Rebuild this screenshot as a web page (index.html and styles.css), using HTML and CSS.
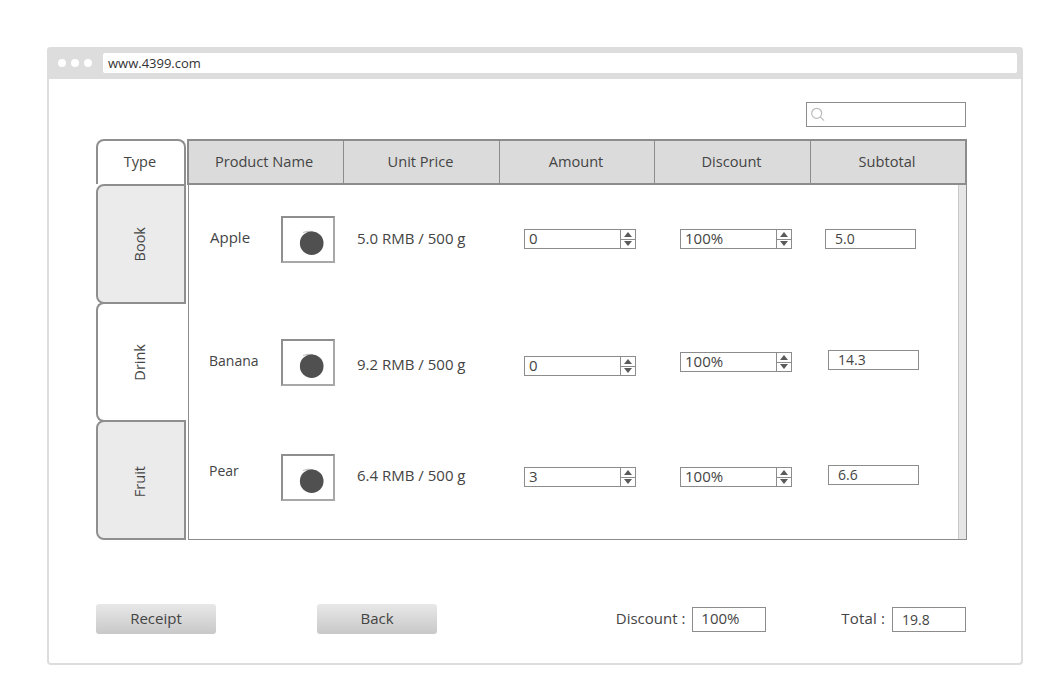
FILE: index.html
```html
<!DOCTYPE html>
<html lang="en">

<head>
    <meta charset="UTF-8">
    <meta name="viewport" content="width=device-width, initial-scale=1.0">
    <title>Product List</title>
    <link rel="stylesheet" href="styles.css">
</head>

<body>
    <div class="browser">
        <div class="titlebar">
            <div class="dots"><span></span><span></span><span></span></div>
            <div class="url">www.4399.com</div>
        </div>

        <div class="page">
            <div class="search-row">
                <div class="search">
                    <svg width="16" height="16" viewBox="0 0 16 16" fill="none" stroke="#bbbbbb" stroke-width="1.2">
                        <circle cx="5.700" cy="6.300" r="5"></circle>
                        <path d="M9.300 9.900l3.800 3.800"></path>
                    </svg>
                </div>
            </div>

            <div class="main">
                <div class="tabs">
                    <div class="tab-type">Type</div>
                    <div class="tab tab-grey"><span>Book</span></div>
                    <div class="tab tab-white"><span>Drink</span></div>
                    <div class="tab tab-grey"><span>Fruit</span></div>
                </div>

                <div class="grid">
                    <div class="grid-head">
                        <div class="head-cell head-name">Product Name</div>
                        <div class="head-cell">Unit Price</div>
                        <div class="head-cell">Amount</div>
                        <div class="head-cell">Discount</div>
                        <div class="head-cell">Subtotal</div>
                    </div>
                    <div class="grid-body">
                        <div class="rows">
                            <div class="row row-apple">
                                <div class="name">Apple</div>
                                <div class="thumb">
                                    <svg width="50" height="43" viewBox="0 0 50 43">
                                        <path d="M20 14.500Q25 12.500 30 13.500" fill="none" stroke="#bbbbbb"></path>
                                        <circle cx="28.700" cy="25.200" r="11.800" fill="#505050"></circle>
                                    </svg>
                                </div>
                                <div class="price">5.0 RMB / 500 g</div>
                                <div class="spinner amount"><span class="val">0</span><span class="arrows"><i class="up"></i><i class="down"></i></span></div>
                                <div class="spinner discount"><span class="val">100%</span><span class="arrows"><i class="up"></i><i class="down"></i></span></div>
                                <div class="subtotal">5.0</div>
                            </div>
                            <div class="row row-banana">
                                <div class="name">Banana</div>
                                <div class="thumb">
                                    <svg width="50" height="43" viewBox="0 0 50 43">
                                        <path d="M20 14.500Q25 12.500 30 13.500" fill="none" stroke="#bbbbbb"></path>
                                        <circle cx="28.700" cy="25.200" r="11.800" fill="#505050"></circle>
                                    </svg>
                                </div>
                                <div class="price">9.2 RMB / 500 g</div>
                                <div class="spinner amount"><span class="val">0</span><span class="arrows"><i class="up"></i><i class="down"></i></span></div>
                                <div class="spinner discount"><span class="val">100%</span><span class="arrows"><i class="up"></i><i class="down"></i></span></div>
                                <div class="subtotal">14.3</div>
                            </div>
                            <div class="row row-pear">
                                <div class="name">Pear</div>
                                <div class="thumb">
                                    <svg width="50" height="43" viewBox="0 0 50 43">
                                        <path d="M20 14.500Q25 12.500 30 13.500" fill="none" stroke="#bbbbbb"></path>
                                        <circle cx="28.700" cy="25.200" r="11.800" fill="#505050"></circle>
                                    </svg>
                                </div>
                                <div class="price">6.4 RMB / 500 g</div>
                                <div class="spinner amount"><span class="val">3</span><span class="arrows"><i class="up"></i><i class="down"></i></span></div>
                                <div class="spinner discount"><span class="val">100%</span><span class="arrows"><i class="up"></i><i class="down"></i></span></div>
                                <div class="subtotal">6.6</div>
                            </div>
                        </div>
                        <div class="scrollbar"></div>
                    </div>
                </div>
            </div>

            <div class="footer">
                <div class="buttons">
                    <div class="btn">Receipt</div>
                    <div class="btn">Back</div>
                </div>
                <div class="totals">
                    <div class="total-item total-discount"><span class="total-label">Discount :</span><span class="total-box total-percent">100%</span></div>
                    <div class="total-item total-sum"><span class="total-label">Total :</span><span class="total-box">19.8</span></div>
                </div>
            </div>
        </div>
    </div>
</body>

</html>
```

FILE: styles.css
```css
body {
    margin: 0;
    background: #ffffff;
    color: #444444;
    font-family: "Open Sans", "Noto Sans", sans-serif;
    font-size: 14px;
}

.browser {
    width: 976px;
    height: 618px;
    margin: 47px 0 0 47px;
    box-sizing: border-box;
    border: 2px solid #dddddd;
    border-top: none;
    border-radius: 4px;
    background: #ffffff;
}

.titlebar {
    display: flex;
    align-items: center;
    height: 32px;
    margin: 0 -2px;
    padding: 0 6px 0 11px;
    box-sizing: border-box;
    background: #dddddd;
    border-radius: 4px 4px 0 0;
}

.dots {
    display: flex;
    gap: 5px;
    width: 45px;
}

.dots span {
    width: 8px;
    height: 8px;
    border-radius: 50%;
    background: #ffffff;
}

.url {
    flex: 1;
    height: 20px;
    padding-left: 5px;
    background: #ffffff;
    border-radius: 2px;
    color: #333333;
    font-size: 13px;
    line-height: 20px;
}

.page {
    padding: 23px 0 0 47px;
}

.search-row {
    display: flex;
    justify-content: flex-end;
    width: 870px;
    height: 37px;
}

.search {
    width: 160px;
    height: 25px;
    box-sizing: border-box;
    border: 1px solid #8c8c8c;
    padding: 4px 0 0 4px;
}

.main {
    display: flex;
    width: 871px;
    height: 401px;
}

.tabs {
    width: 90px;
    flex: none;
    font-size: 14.500px;
}

.tab-type {
    height: 45px;
    box-sizing: border-box;
    border: 2px solid #8f8f8f;
    border-bottom: none;
    border-radius: 8px 8px 0 0;
    padding-right: 2px;
    text-align: center;
    line-height: 42px;
}

.tab {
    display: flex;
    align-items: center;
    justify-content: center;
    height: 120px;
    box-sizing: border-box;
    border: 2px solid #8f8f8f;
    border-radius: 8px 0 0 8px;
    margin-bottom: -2px;
    padding-right: 3px;
}

.tab:last-child {
    padding-top: 3px;
}

.tab span {
    writing-mode: vertical-rl;
    transform: rotate(180deg);
}

.tab-grey {
    background: #ebebeb;
}

.tab-white {
    background: #ffffff;
    border-right: none;
    padding-right: 5px;
}

.grid {
    flex: 1;
    margin-left: 1px;
}

.grid-head {
    display: grid;
    grid-template-columns: 155px 156px 155px 156px 1fr;
    height: 46px;
    box-sizing: border-box;
    border: 2px solid #8c8c8c;
    background: #dbdbdb;
}

.head-cell {
    border-right: 1px solid #8c8c8c;
    padding-right: 2px;
    text-align: center;
    line-height: 40px;
    font-size: 14.600px;
}

.head-cell:last-child {
    border-right: none;
}

.head-name {
    padding-right: 4px;
}

.grid-body {
    display: flex;
    height: 355px;
    margin-left: 1px;
    box-sizing: border-box;
    border: 1px solid #8c8c8c;
    border-top: none;
}

.rows {
    flex: 1;
}

.scrollbar {
    width: 8px;
    box-sizing: border-box;
    border-left: 1px solid #c8c8c8;
    background: #e6e6e6;
}

.row {
    display: flex;
    align-items: flex-start;
    height: 123px;
    font-size: 15px;
}

.row-banana {
    height: 115px;
}

.name {
    width: 71px;
    margin-left: 21px;
    flex: none;
    line-height: 18px;
}

.thumb {
    width: 54px;
    height: 47px;
    flex: none;
    box-sizing: border-box;
    border: 2px solid;
    border-color: #8f8f8f #a8a8a8 #a8a8a8 #8f8f8f;
}

.thumb svg {
    display: block;
}

.price {
    width: 167px;
    margin-left: 22px;
    flex: none;
    line-height: 18px;
}

.spinner {
    display: flex;
    width: 112px;
    height: 20px;
    flex: none;
    box-sizing: border-box;
    border: 1px solid #8c8c8c;
    line-height: 16px;
}

.val {
    flex: 1;
    padding-left: 4px;
}

.arrows {
    display: flex;
    flex-direction: column;
    width: 14px;
    border-left: 1px solid #8c8c8c;
}

.arrows i {
    flex: 1;
    display: flex;
    align-items: center;
    justify-content: center;
}

.arrows i::before {
    content: "";
    width: 0;
    height: 0;
    border-left: 4.500px solid transparent;
    border-right: 4.500px solid transparent;
}

.arrows .up {
    border-bottom: 1px solid #8c8c8c;
}

.arrows .up::before {
    border-bottom: 5px solid #5a5a5a;
}

.arrows .down::before {
    border-top: 5px solid #5a5a5a;
}

.amount {
    margin-right: 44px;
}

.subtotal {
    width: 91px;
    height: 20px;
    flex: none;
    box-sizing: border-box;
    border: 1px solid #8c8c8c;
    padding-left: 9px;
    font-size: 14px;
    line-height: 18px;
}

.discount {
    margin-right: 33px;
}

.row-apple .price {
    margin-top: 44px;
}

.row-apple .name {
    margin-top: 43px;
}

.row-apple .thumb {
    margin-top: 31px;
}

.row-apple .spinner,
.row-apple .subtotal {
    margin-top: 44px;
}

.row-banana .name {
    margin-top: 44px;
    margin-left: 20px;
    width: 72px;
    font-size: 14px;
}

.row-banana .thumb {
    margin-top: 31px;
}

.row-banana .price {
    margin-top: 47px;
}

.row-banana .amount {
    margin-top: 48px;
}

.row-banana .discount {
    margin-top: 44px;
    margin-right: 36px;
}

.row-banana .subtotal {
    margin-top: 42px;
}

.row-pear .name {
    margin-top: 39px;
    margin-left: 20px;
    width: 72px;
    font-size: 14px;
}

.row-pear .thumb {
    margin-top: 31px;
}

.row-pear .price {
    margin-top: 43px;
}

.row-pear .spinner {
    margin-top: 44px;
}

.row-pear .discount {
    margin-right: 36px;
}

.row-pear .subtotal {
    margin-top: 42px;
}

.footer {
    display: flex;
    justify-content: space-between;
    align-items: center;
    width: 870px;
    height: 30px;
    margin-top: 64px;
}

.buttons {
    display: flex;
    gap: 101px;
    font-size: 15px;
}

.btn {
    width: 120px;
    height: 30px;
    border-radius: 3px;
    background: linear-gradient(#e8e8e8, #c8c8c8);
    text-align: center;
    line-height: 29px;
}

.totals {
    display: flex;
}

.total-item {
    display: flex;
    align-items: center;
    gap: 7px;
    font-size: 15px;
}

.total-label {
    margin-bottom: 2px;
}

.total-sum .total-label {
    letter-spacing: 0.150px;
}

.total-discount {
    margin-right: 75px;
}

.total-box {
    width: 74px;
    height: 25px;
    box-sizing: border-box;
    border: 1px solid #8c8c8c;
    padding-left: 9px;
    font-size: 14px;
    line-height: 23px;
}

.total-percent {
    padding-left: 8px;
    font-size: 15px;
    line-height: 21px;
}
```
